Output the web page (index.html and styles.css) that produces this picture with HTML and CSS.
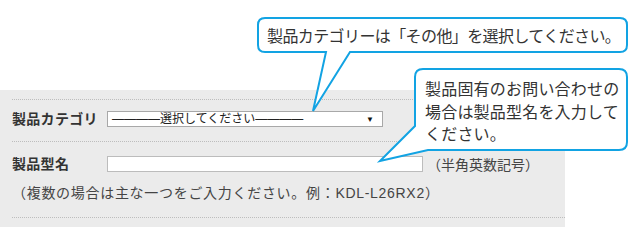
FILE: index.html
```html
<!DOCTYPE html>
<html lang="ja">
<head>
    <meta charset="UTF-8">
    <meta name="viewport" content="width=device-width, initial-scale=1.0">
    <title>製品情報の入力</title>
    <link rel="stylesheet" href="styles.css">
</head>
<body>
    <div class="page">
        <div class="panel">
            <div class="row row-category">
                <label class="field-label">製品カテゴリ</label>
                <div class="select-box">
                    <span class="select-text">――――選択してください――――</span>
                    <span class="select-arrow">▼</span>
                </div>
            </div>
            <div class="row row-model">
                <div class="field-line">
                    <label class="field-label" for="model">製品型名</label>
                    <input type="text" id="model" class="text-input">
                    <span class="hint">（半角英数記号）</span>
                </div>
                <p class="note">（複数の場合は主な一つをご入力ください。例：KDL-L26RX2）</p>
            </div>
            <div class="row row-end"></div>
        </div>

        <!-- callout balloons drawn over the form -->
        <svg class="balloons" width="630" height="245" viewBox="0 0 630 245">
            <path d="M265 18 H620 Q627 18 627 25 V45 Q627 52 620 52 H350 L313 111 L326 52 H265 Q258 52 258 45 V25 Q258 18 265 18 Z" />
            <path d="M423 69 H619 Q627 69 627 77 V142 Q627 150 619 150 H428 L380 161 L415 126 V77 Q415 69 423 69 Z" />
        </svg>
        <div class="balloon-text balloon-one">製品カテゴリーは「その他」を選択してください。</div>
        <div class="balloon-text balloon-two">製品固有のお問い合わせの<br>場合は製品型名を入力して<br>ください。</div>
    </div>
</body>
</html>
```

FILE: styles.css
```css
body {
    margin: 0;
    background: #fff;
    font-family: 'Liberation Sans', 'Noto Sans CJK JP', sans-serif;
    color: #333;
}
.page {
    position: relative;
    width: 630px;
    height: 245px;
    overflow: hidden;
}
.panel {
    margin-top: 90px;
    width: 565px;
    padding-top: 9px;
    padding-bottom: 9px;
    background: #ebebeb;
    box-sizing: border-box;
}
.row {
    margin-left: 12px;
    border-top: 1px dotted #bdbdbd;
}
.row-category {
    display: flex;
    align-items: center;
    padding: 11px 0 14px;
}
.row-model {
    padding: 12px 0 15px;
}
.field-line {
    display: flex;
    align-items: center;
}
.field-label {
    width: 95px;
    font-size: 14px;
    font-weight: bold;
    line-height: 16px;
    letter-spacing: 0.3px;
    color: #333;
}
.select-box {
    display: flex;
    align-items: center;
    justify-content: space-between;
    width: 276px;
    height: 16px;
    padding: 0 8px 0 4px;
    background: #fff;
    border: 1px solid #a8a8a8;
    box-sizing: border-box;
    font-size: 12px;
    color: #222;
}
.select-text {
    line-height: 14px;
    white-space: nowrap;
}
.select-arrow {
    font-size: 8px;
    color: #111;
}
.text-input {
    width: 316px;
    height: 16px;
    margin: 0;
    padding: 0 4px;
    border: 1px solid #bcbcbc;
    background: #fff;
    box-sizing: border-box;
}
.hint {
    margin-left: 4px;
    font-size: 14px;
    color: #444;
    white-space: nowrap;
}
.note {
    margin: 10px 0 0;
    font-size: 14px;
    line-height: 18px;
    letter-spacing: 0.7px;
    color: #444;
}
.row-end {
    height: 0;
}
.balloons {
    position: absolute;
    left: 0;
    top: 0;
}
.balloons path {
    fill: #fff;
    stroke: #12a3e3;
    stroke-width: 2;
}
.balloon-text {
    position: absolute;
    font-family: 'Noto Sans CJK JP', sans-serif;
    font-size: 16px;
    color: #333;
    white-space: nowrap;
}
.balloon-one {
    left: 267px;
    top: 18px;
    line-height: 34px;
    letter-spacing: -0.6px;
}
.balloon-two {
    left: 425px;
    top: 77px;
    line-height: 22.5px;
    letter-spacing: 0.2px;
}
```
